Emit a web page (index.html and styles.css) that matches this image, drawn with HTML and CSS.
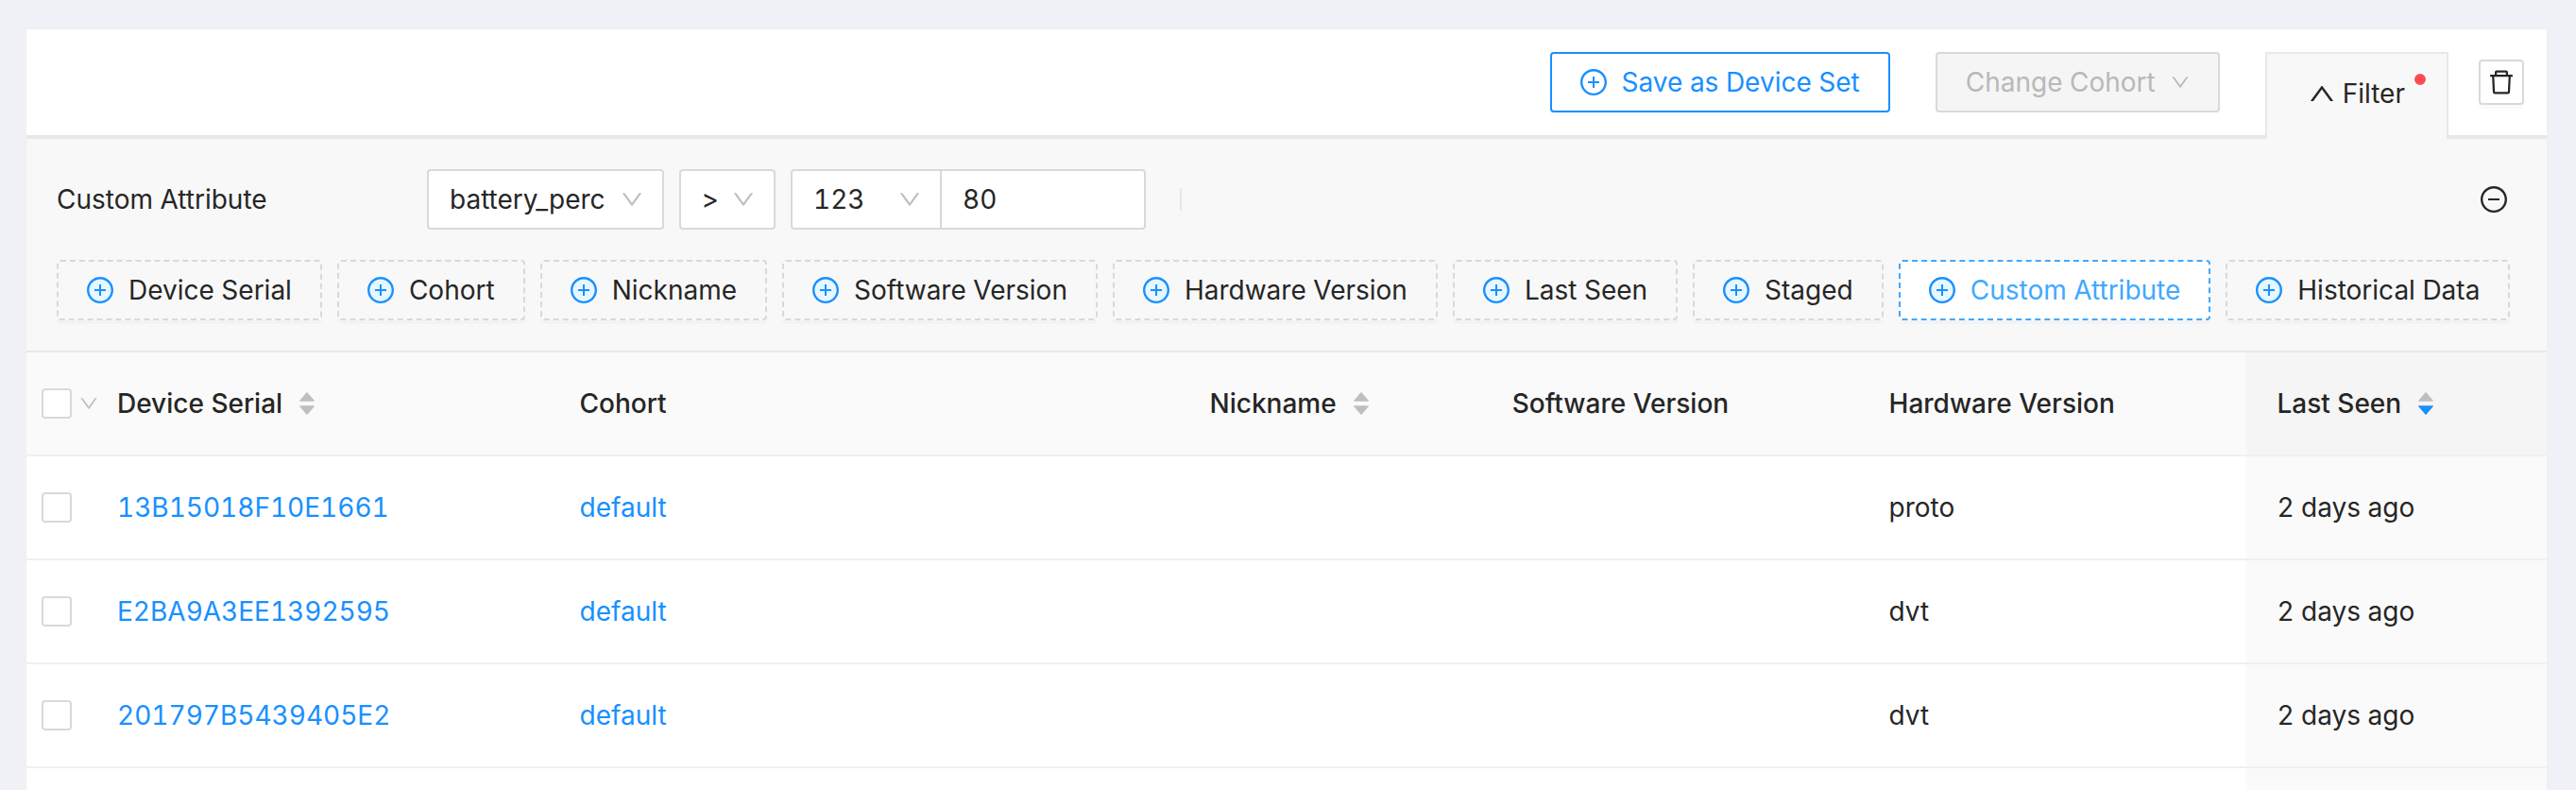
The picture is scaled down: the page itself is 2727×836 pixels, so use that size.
FILE: index.html
```html
<!DOCTYPE html>
<html lang="en">
<head>
<meta charset="utf-8">
<title>Devices</title>
<link rel="stylesheet" href="styles.css">
</head>
<body>
<svg class="sprite" aria-hidden="true">
  <symbol id="plus" viewBox="64 64 896 896"><circle class="tone" cx="512" cy="512" r="410"/><path d="M696 480H544V328c0-4.400-3.600-8-8-8h-48c-4.400 0-8 3.600-8 8v152H328c-4.400 0-8 3.600-8 8v48c0 4.400 3.600 8 8 8h152v152c0 4.400 3.600 8 8 8h48c4.400 0 8-3.600 8-8V544h152c4.400 0 8-3.600 8-8v-48c0-4.400-3.600-8-8-8z"/><path d="M512 64C264.600 64 64 264.600 64 512s200.600 448 448 448 448-200.600 448-448S759.400 64 512 64zm0 820c-205.400 0-372-166.600-372-372s166.600-372 372-372 372 166.600 372 372-166.600 372-372 372z"/></symbol>
  <symbol id="minus" viewBox="64 64 896 896"><path d="M696 480H328c-4.400 0-8 3.600-8 8v48c0 4.400 3.600 8 8 8h368c4.400 0 8-3.600 8-8v-48c0-4.400-3.600-8-8-8z"/><path d="M512 64C264.600 64 64 264.600 64 512s200.600 448 448 448 448-200.600 448-448S759.400 64 512 64zm0 820c-205.400 0-372-166.600-372-372s166.600-372 372-372 372 166.600 372 372-166.600 372-372 372z"/></symbol>
  <symbol id="down" viewBox="64 64 896 896"><path d="M884 256h-75c-5.100 0-9.900 2.500-12.900 6.600L512 654.200 227.900 262.600c-3-4.100-7.800-6.600-12.900-6.600h-75c-6.500 0-10.300 7.400-6.500 12.700l352.600 486.100c12.800 17.600 39 17.600 51.700 0l352.600-486.100c3.900-5.300.1-12.700-6.400-12.700z"/></symbol>
  <symbol id="up" viewBox="64 64 896 896"><path d="M890.500 755.300L537.900 269.200c-12.800-17.600-39-17.600-51.700 0L133.500 755.300A8 8 0 0 0 140 768h75c5.100 0 9.900-2.500 12.900-6.600L512 369.800l284.100 391.600c3 4.100 7.800 6.600 12.900 6.600h75c6.500 0 10.300-7.400 6.500-12.700z"/></symbol>
  <symbol id="trash" viewBox="64 64 896 896"><path d="M360 184h-8c4.400 0 8-3.600 8-8v8h304v-8c0 4.400 3.600 8 8 8h-8v72h72v-80c0-35.300-28.700-64-64-64H352c-35.300 0-64 28.700-64 64v80h72v-72zm504 72H160c-17.700 0-32 14.300-32 32v32c0 4.400 3.600 8 8 8h60.400l24.700 523c1.600 34.100 29.800 61 63.900 61h454c34.200 0 62.300-26.800 63.900-61l24.700-523H888c4.400 0 8-3.600 8-8v-32c0-17.700-14.300-32-32-32zM731.300 840H292.700l-24.200-512h487l-24.200 512z"/></symbol>
  <symbol id="caret-up" viewBox="160 300 704 424"><path d="M858.900 689L530.500 308.200c-9.400-10.900-27.500-10.900-37 0L165.100 689c-12.200 14.200-1.200 35 18.500 35h656.800c19.700 0 30.700-20.800 18.500-35z"/></symbol>
  <symbol id="caret-down" viewBox="160 300 704 424"><path d="M840.400 300H183.600c-19.700 0-30.700 20.800-18.500 35l328.400 380.800c9.400 10.900 27.500 10.900 37 0L858.900 335c12.200-14.200 1.200-35-18.500-35z"/></symbol>
</svg>
<main class="card">
  <header class="toolbar">
    <button class="btn btn-primary" type="button"><svg class="icon"><use href="#plus"/></svg>Save as Device Set</button>
    <button class="btn btn-disabled" type="button" disabled>Change Cohort<svg class="icon icon-sm"><use href="#down"/></svg></button>
    <div class="toolbar-end">
      <button class="tab" type="button" aria-expanded="true"><svg class="icon"><use href="#up"/></svg>Filter<span class="dot"></span></button>
      <button class="btn-square" type="button" aria-label="Delete"><svg class="icon"><use href="#trash"/></svg></button>
    </div>
  </header>

  <section class="filters">
    <div class="condition">
      <span class="condition-name">Custom Attribute</span>
      <div class="condition-fields">
        <div class="select select-attribute"><select aria-label="Attribute"><option>battery_perc</option></select><svg class="icon icon-md"><use href="#down"/></svg></div>
        <div class="select select-operator"><select aria-label="Operator"><option>&gt;</option></select><svg class="icon icon-md"><use href="#down"/></svg></div>
        <div class="group">
          <div class="select select-type"><select aria-label="Value type"><option>123</option></select><svg class="icon icon-md"><use href="#down"/></svg></div>
          <input class="value" type="text" value="80" aria-label="Value">
        </div>
        <span class="divider"></span>
      </div>
      <button class="remove" type="button" aria-label="Remove condition"><svg class="icon"><use href="#minus"/></svg></button>
    </div>
    <div class="chips">
      <button class="btn chip" type="button"><svg class="icon"><use href="#plus"/></svg>Device Serial</button>
      <button class="btn chip" type="button"><svg class="icon"><use href="#plus"/></svg>Cohort</button>
      <button class="btn chip" type="button"><svg class="icon"><use href="#plus"/></svg>Nickname</button>
      <button class="btn chip" type="button"><svg class="icon"><use href="#plus"/></svg>Software Version</button>
      <button class="btn chip" type="button"><svg class="icon"><use href="#plus"/></svg>Hardware Version</button>
      <button class="btn chip" type="button"><svg class="icon"><use href="#plus"/></svg>Last Seen</button>
      <button class="btn chip" type="button"><svg class="icon"><use href="#plus"/></svg>Staged</button>
      <button class="btn chip chip-active" type="button"><svg class="icon"><use href="#plus"/></svg>Custom Attribute</button>
      <button class="btn chip" type="button"><svg class="icon"><use href="#plus"/></svg>Historical Data</button>
    </div>
  </section>

  <table class="devices">
    <colgroup><col class="col-check"><col class="col-serial"><col class="col-cohort"><col class="col-nickname"><col class="col-software"><col class="col-hardware"><col></colgroup>
    <thead>
      <tr>
        <th class="check"><div class="check-all"><input type="checkbox" aria-label="Select all"><svg class="icon icon-sm"><use href="#down"/></svg></div></th>
        <th><div class="sortable">Device Serial<span class="sorter"><svg><use href="#caret-up"/></svg><svg><use href="#caret-down"/></svg></span></div></th>
        <th>Cohort</th>
        <th><div class="sortable">Nickname<span class="sorter"><svg><use href="#caret-up"/></svg><svg><use href="#caret-down"/></svg></span></div></th>
        <th>Software Version</th>
        <th>Hardware Version</th>
        <th class="sorted"><div class="sortable">Last Seen<span class="sorter"><svg><use href="#caret-up"/></svg><svg class="on"><use href="#caret-down"/></svg></span></div></th>
      </tr>
    </thead>
    <tbody>
      <tr><td class="check"><input type="checkbox" aria-label="Select 13B15018F10E1661"></td><td><a href="#">13B15018F10E1661</a></td><td><a href="#">default</a></td><td></td><td></td><td>proto</td><td class="sorted">2 days ago</td></tr>
      <tr><td class="check"><input type="checkbox" aria-label="Select E2BA9A3EE1392595"></td><td><a href="#">E2BA9A3EE1392595</a></td><td><a href="#">default</a></td><td></td><td></td><td>dvt</td><td class="sorted">2 days ago</td></tr>
      <tr><td class="check"><input type="checkbox" aria-label="Select 201797B5439405E2"></td><td><a href="#">201797B5439405E2</a></td><td><a href="#">default</a></td><td></td><td></td><td>dvt</td><td class="sorted">2 days ago</td></tr>
      <tr class="rest"><td></td><td></td><td></td><td></td><td></td><td></td><td class="sorted"></td></tr>
    </tbody>
  </table>
</main>
</body>
</html>
```
FILE: styles.css
```css
* { box-sizing: border-box; }
html { overflow: hidden; }
body {
  margin: 0;
  padding: 29px 29px 0 26px;
  background: #f0f1f6;
  color: #262626;
  font: 28px/44px Inter, sans-serif;
  font-variant-numeric: tabular-nums;
}
button, input, select { margin: 0; font: inherit; font-variant-numeric: inherit; color: inherit; }
a { color: #1890ff; text-decoration: none; }
.sprite { position: absolute; width: 0; height: 0; }
.icon { width: 28px; height: 28px; flex: none; fill: currentColor; }
.icon-md { width: 24px; height: 24px; }
.icon-sm { width: 20px; height: 20px; }
.tone { fill: var(--tone, none); }

.card {
  border: 2px solid #f0f0f0;
  border-bottom: 0;
  border-radius: 4px 4px 0 0;
  background: #fff;
}

.toolbar {
  display: flex;
  justify-content: flex-end;
  align-items: center;
  gap: 48px;
  padding: 24px 24px 24px 32px;
  border-bottom: 4px solid #e8e8e8;
}
.toolbar-end { display: flex; align-items: center; align-self: stretch; gap: 32px; }
.btn {
  display: flex;
  align-items: center;
  gap: 16px;
  height: 64px;
  padding: 0 30px;
  border: 2px solid #d9d9d9;
  border-radius: 4px;
  background: #fff;
  box-shadow: 0 4px 0 rgba(0, 0, 0, 0.02);
  white-space: nowrap;
}
.btn-primary { border-color: #1890ff; color: #1890ff; }
.btn-disabled { background: #f5f5f5; color: #b8b8b8; box-shadow: none; }
.tab {
  position: relative;
  display: flex;
  align-items: center;
  gap: 8px;
  align-self: stretch;
  margin-bottom: -28px;
  padding: 0 44px 6px;
  border: 2px solid #e8e8e8;
  border-bottom: 0;
  background: #f8f8f8;
}
.dot {
  position: absolute;
  top: 19px;
  right: 20px;
  width: 16px;
  height: 16px;
  border: 2px solid #fff;
  border-radius: 50%;
  background: #ff4d4f;
}
.btn-square {
  display: flex;
  align-items: center;
  justify-content: center;
  width: 48px;
  height: 48px;
  padding: 0;
  border: 2px solid #d9d9d9;
  border-radius: 4px;
  background: #fff;
  box-shadow: 0 4px 0 rgba(0, 0, 0, 0.02);
}

.filters {
  display: grid;
  gap: 32px;
  padding: 32px;
  border-bottom: 2px solid #e8e8e8;
  background: #f8f8f8;
}
.condition { display: flex; align-items: center; }
.condition-name { width: 392px; }
.condition-fields { display: flex; flex: 1; align-items: center; gap: 16px; }
.select { display: grid; align-items: center; }
.select select, .select .icon { grid-area: 1 / 1; }
.select .icon { justify-self: end; margin-right: 22px; color: #bfbfbf; pointer-events: none; }
.select select, .value {
  width: 100%;
  height: 64px;
  padding: 0 22px;
  border: 2px solid #d9d9d9;
  border-radius: 4px;
  background: #fff;
  appearance: none;
}
.select-attribute { width: 251px; }
.select-operator { width: 102px; }
.select-type { width: 160px; }
.group { display: flex; }
.group select { border-radius: 4px 0 0 4px; }
.group .value { width: 218px; margin-left: -2px; border-radius: 0 4px 4px 0; }
.divider { width: 2px; height: 24px; margin-left: 20px; background: #e8e8e8; }
.remove { display: flex; padding: 0 10px; border: 0; background: none; }

.chips { display: flex; gap: 16px; }
.chip { border-style: dashed; background: #f8f8f8; }
.chip .icon { --tone: #e6f7ff; color: #1890ff; }
.chip-active { border-color: #40a9ff; background: #fff; color: #40a9ff; }

.devices { width: 100%; border-collapse: separate; border-spacing: 0; table-layout: fixed; }
.devices th, .devices td {
  padding: 32px;
  border-bottom: 2px solid #f0f0f0;
  text-align: left;
  font-weight: 400;
}
.devices th { background: #fafafa; font-weight: 500; }
.devices td.sorted { background: #fafafa; }
.devices th.sorted { background: #f5f5f5; }
.devices .check { padding: 32px 0 32px 16px; }
.devices .rest td { padding: 12px 0; border-bottom: 0; }
.col-check { width: 64px; }
.col-serial { width: 18.35%; }
.col-cohort { width: 25%; }
.col-nickname { width: 12%; }
.col-software { width: 14.95%; }
.col-hardware { width: 15.4%; }
.check input {
  display: block;
  width: 32px;
  height: 32px;
  flex: none;
  border: 2px solid #d9d9d9;
  border-radius: 4px;
  background: #fff;
  appearance: none;
}
.check-all { display: flex; align-items: center; gap: 8px; color: #bfbfbf; }
.sortable { display: flex; align-items: center; gap: 18px; }
.sorter { display: grid; gap: 4px; color: #bfbfbf; }
.sorter svg { width: 16px; height: 10px; fill: currentColor; }
.sorter .on { color: #1890ff; }
```
